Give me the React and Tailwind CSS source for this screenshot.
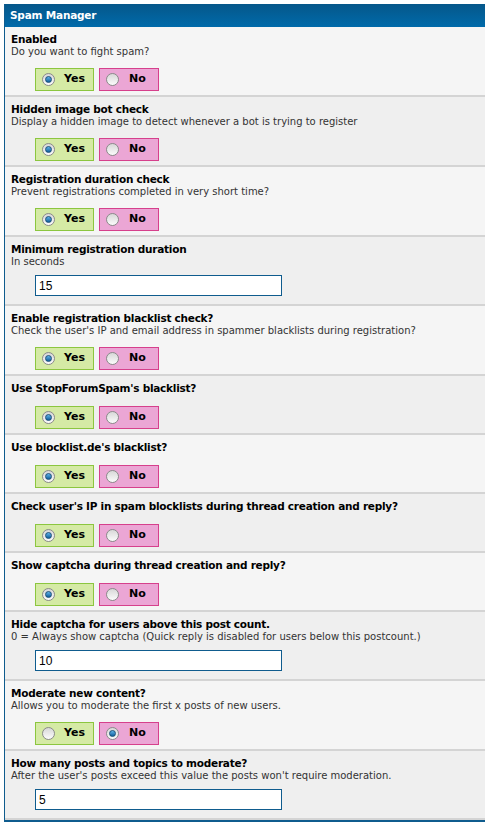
import React, { useState } from 'react';

const settings = [
  { key: 'enabled', title: 'Enabled', desc: 'Do you want to fight spam?', type: 'yesno', value: true },
  { key: 'hidden', title: 'Hidden image bot check', desc: 'Display a hidden image to detect whenever a bot is trying to register', type: 'yesno', value: true },
  { key: 'duration', title: 'Registration duration check', desc: 'Prevent registrations completed in very short time?', type: 'yesno', value: true },
  { key: 'minduration', title: 'Minimum registration duration', desc: 'In seconds', type: 'text', value: '15' },
  { key: 'blacklist', title: 'Enable registration blacklist check?', desc: "Check the user's IP and email address in spammer blacklists during registration?", type: 'yesno', value: true },
  { key: 'sfs', title: "Use StopForumSpam's blacklist?", type: 'yesno', value: true },
  { key: 'blde', title: "Use blocklist.de's blacklist?", type: 'yesno', value: true },
  { key: 'ipcheck', title: "Check user's IP in spam blocklists during thread creation and reply?", type: 'yesno', value: true },
  { key: 'captcha', title: 'Show captcha during thread creation and reply?', type: 'yesno', value: true },
  { key: 'captchacount', title: 'Hide captcha for users above this post count.', desc: '0 = Always show captcha (Quick reply is disabled for users below this postcount.)', type: 'text', value: '10' },
  { key: 'moderate', title: 'Moderate new content?', desc: 'Allows you to moderate the first x posts of new users.', type: 'yesno', value: false },
  { key: 'modcount', title: 'How many posts and topics to moderate?', desc: "After the user's posts exceed this value the posts won't require moderation.", type: 'text', value: '5' },
];

const Radio = ({ checked }) => (
  <span className="w-[13px] h-[13px] rounded-full border border-[#8a8a8a] bg-gradient-to-b from-[#d8d8d8] to-[#fbfbfb] flex items-center justify-center shrink-0">
    {checked && <span className="w-[7px] h-[7px] rounded-full bg-gradient-to-b from-[#5fb3e8] to-[#0b5f9c] border border-[#1b4f78]" />}
  </span>
);

const YesNo = ({ value, onChange }) => (
  <div className="flex gap-[5px]">
    <button
      type="button"
      onClick={() => onChange(true)}
      className="w-[59px] h-[23px] flex items-center pl-[6px] gap-[9px] bg-[#d5eaa5] border border-[#8cc63f] text-[11px] font-bold text-black"
    >
      <Radio checked={value} />
      Yes
    </button>
    <button
      type="button"
      onClick={() => onChange(false)}
      className="w-[60px] h-[23px] flex items-center pl-[6px] gap-[10px] bg-[#eba6d5] border border-[#d6408c] text-[11px] font-bold text-black"
    >
      <Radio checked={!value} />
      No
    </button>
  </div>
);

const App = () => {
  const [values, setValues] = useState(
    Object.fromEntries(settings.map((s) => [s.key, s.value]))
  );

  const setValue = (key, v) => setValues({ ...values, [key]: v });

  return (
    <div className="w-[485px] h-[827px] overflow-hidden bg-white font-['DejaVu_Sans',Verdana,sans-serif]">
      <div className="ml-[4px] mt-[4px] w-[520px] border-l border-b-2 border-[#0f5c8e]">
        <div className="h-[23px] bg-gradient-to-b from-[#05578a] to-[#006aaa] text-white text-[10.5px] tracking-[-0.2px] font-bold pl-[5px] flex items-center">
          Spam Manager
        </div>
        {settings.map((s, i) => (
          <div
            key={s.key}
            className={`px-[6px] pt-[6px] border-b-2 border-[#d4d4d4] ${s.type === 'text' ? 'pb-[8px]' : 'pb-[4px]'} ${i % 2 === 0 ? 'bg-[#f5f5f5]' : 'bg-[#efefef]'}`}
          >
            <div className="text-[10.5px] tracking-[-0.25px] font-bold text-black leading-[13px]">{s.title}</div>
            {s.desc && (
              <div className="text-[10px] text-[#333333] leading-[12px]">{s.desc}</div>
            )}
            <div className={`pl-[24px] ${!s.desc ? 'pt-[11px]' : s.type === 'text' ? 'pt-[7px]' : 'pt-[10px]'}`}>
              {s.type === 'yesno' ? (
                <YesNo value={values[s.key]} onChange={(v) => setValue(s.key, v)} />
              ) : (
                <input
                  type="text"
                  value={values[s.key]}
                  onChange={(e) => setValue(s.key, e.target.value)}
                  className="block w-[247px] h-[21px] border border-[#0f5c8e] bg-white px-[3px] text-[12px] font-['Liberation_Sans',Arial,sans-serif] text-black outline-none"
                />
              )}
            </div>
          </div>
        ))}
      </div>
    </div>
  );
};

export default App;
